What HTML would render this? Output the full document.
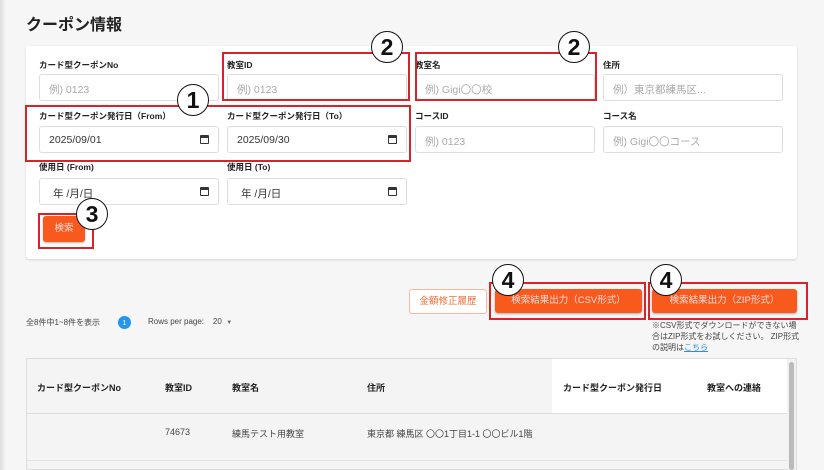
<!DOCTYPE html>
<html><head><meta charset="utf-8"><style>
*{box-sizing:border-box;margin:0;padding:0}
body{width:824px;height:470px;overflow:hidden;background:#f6f6f6;font-family:"Liberation Sans","Noto Sans CJK JP",sans-serif;color:#222;position:relative}
.a{position:absolute}
.edge{left:0;top:0;width:6px;height:470px;background:linear-gradient(90deg,#ddd,#f6f6f6)}
h1{position:absolute;left:26px;top:11px;font-size:16px;font-weight:bold}
.card{left:26px;top:46px;width:771px;height:213px;background:#fff;border-radius:3px;box-shadow:0 1px 2px rgba(0,0,0,.15)}
.lb{position:absolute;font-size:8.5px;font-weight:bold;color:#222}
.in{position:absolute;width:180px;height:27px;border:1px solid #ddd;border-radius:3px;background:#fff;font-size:10.5px;color:#aaa;padding:7px 9px}
.in.v{color:#333}
.cal{position:absolute;right:9px;top:8px;width:9px;height:9px;border:1.5px solid #333;border-top-width:3px;border-radius:1px}
.rb{position:absolute;border:2px solid #d8232a}
.ci{position:absolute;width:32px;height:32px;border:1.5px solid #111;border-radius:50%;background:#fff;font-size:23px;font-weight:bold;text-align:center;line-height:30px;color:#111}
.btn{position:absolute;background:#f85a1e;color:#fdd;font-size:9.5px;text-align:center;border-radius:3px;box-shadow:0 1px 2px rgba(0,0,0,.3)}
</style></head><body>
<div class="a edge"></div>
<h1>クーポン情報</h1>
<div class="a card"></div>
<div class="lb" style="left:39px;top:59px">カード型クーポンNo</div>
<div class="in" style="left:39px;top:74px">例) 0123</div>
<div class="lb" style="left:227px;top:59px">教室ID</div>
<div class="in" style="left:227px;top:74px">例) 0123</div>
<div class="lb" style="left:415px;top:59px">教室名</div>
<div class="in" style="left:415px;top:74px">例) Gigi〇〇校</div>
<div class="lb" style="left:603px;top:59px">住所</div>
<div class="in" style="left:603px;top:74px">例）東京都練馬区...</div>

<div class="lb" style="left:39px;top:110px">カード型クーポン発行日（From）</div>
<div class="in v" style="left:39px;top:126px">2025/09/01<span class="cal"></span></div>
<div class="lb" style="left:227px;top:110px">カード型クーポン発行日（To）</div>
<div class="in v" style="left:227px;top:126px">2025/09/30<span class="cal"></span></div>
<div class="lb" style="left:415px;top:110px">コースID</div>
<div class="in" style="left:415px;top:126px">例) 0123</div>
<div class="lb" style="left:603px;top:110px">コース名</div>
<div class="in" style="left:603px;top:126px">例) Gigi〇〇コース</div>

<div class="lb" style="left:39px;top:161px">使用日 (From)</div>
<div class="in v" style="left:39px;top:178px;padding-left:13px">年 /月/日<span class="cal"></span></div>
<div class="lb" style="left:227px;top:161px">使用日 (To)</div>
<div class="in v" style="left:227px;top:178px;padding-left:13px">年 /月/日<span class="cal"></span></div>

<div class="btn" style="left:43px;top:216px;width:42px;height:26px;line-height:26px">検索</div>

<div class="rb" style="left:222px;top:52px;width:188px;height:49px"></div>
<div class="rb" style="left:415px;top:52px;width:182px;height:49px"></div>
<div class="rb" style="left:25px;top:105px;width:386px;height:57px"></div>
<div class="rb" style="left:38px;top:213px;width:56px;height:36px"></div>
<div class="ci" style="left:177px;top:84px">1</div>
<div class="ci" style="left:371px;top:31px">2</div>
<div class="ci" style="left:558px;top:31px">2</div>
<div class="ci" style="left:76px;top:198px">3</div>

<div class="a" style="left:409px;top:289px;width:78px;height:25px;border:1px solid #f6b9a0;border-radius:3px;background:#fff;color:#f0703a;font-size:9.5px;text-align:center;line-height:23px">金額修正履歴</div>
<div class="btn" style="left:495px;top:289px;width:147px;height:24px;line-height:24px">検索結果出力（CSV形式）</div>
<div class="btn" style="left:652px;top:289px;width:145px;height:24px;line-height:24px">検索結果出力（ZIP形式）</div>
<div class="rb" style="left:489px;top:282px;width:157px;height:38px"></div>
<div class="rb" style="left:648px;top:282px;width:160px;height:38px"></div>
<div class="ci" style="left:492px;top:264px">4</div>
<div class="ci" style="left:650px;top:264px">4</div>
<div class="a" style="left:652px;top:320px;width:148px;font-size:8px;line-height:11px;color:#444">※CSV形式でダウンロードができない場合はZIP形式をお試しください。 ZIP形式の説明は<span style="color:#2a8ee0;text-decoration:underline">こちら</span></div>

<div class="a" style="left:26px;top:317px;font-size:8px;color:#444">全8件中1~8件を表示</div>
<div class="a" style="left:118px;top:316px;width:13px;height:13px;border-radius:50%;background:#2196f3;color:#fff;font-size:7.5px;text-align:center;line-height:13px">1</div>
<div class="a" style="left:148px;top:317px;font-size:8px;color:#444">Rows per page:&nbsp;&nbsp;&nbsp;&nbsp;20&nbsp;&nbsp;<span style="font-size:6px;color:#666">▼</span></div>

<div class="a" style="left:26px;top:358px;width:771px;height:112px;border:1px solid #ddd;background:#f4f4f4"></div>
<div class="a" style="left:552px;top:359px;width:235px;height:54px;background:#fff"></div>
<div class="a" style="left:27px;top:413px;width:760px;height:1px;background:#ddd"></div>
<div class="a" style="left:27px;top:460px;width:760px;height:1px;background:#e2e2e2"></div>
<div class="a" style="left:788px;top:360px;width:8px;height:110px;background:#f0f0f0"></div>
<div class="a" style="left:789px;top:362px;width:5px;height:108px;background:#bbb;border-radius:3px"></div>
<div class="a" style="top:381px;left:37px;font-size:9px;font-weight:bold">カード型クーポンNo</div>
<div class="a" style="top:381px;left:165px;font-size:9px;font-weight:bold">教室ID</div>
<div class="a" style="top:381px;left:232px;font-size:9px;font-weight:bold">教室名</div>
<div class="a" style="top:381px;left:367px;font-size:9px;font-weight:bold">住所</div>
<div class="a" style="top:381px;left:563px;font-size:9px;font-weight:bold">カード型クーポン発行日</div>
<div class="a" style="top:381px;left:707px;font-size:9px;font-weight:bold">教室への連絡</div>
<div class="a" style="top:427px;left:165px;font-size:9px;color:#444">74673</div>
<div class="a" style="top:427px;left:232px;font-size:9px;color:#444">練馬テスト用教室</div>
<div class="a" style="top:427px;left:367px;font-size:9px;color:#444">東京都 練馬区 〇〇1丁目1-1 〇〇ビル1階</div>
</body></html>
